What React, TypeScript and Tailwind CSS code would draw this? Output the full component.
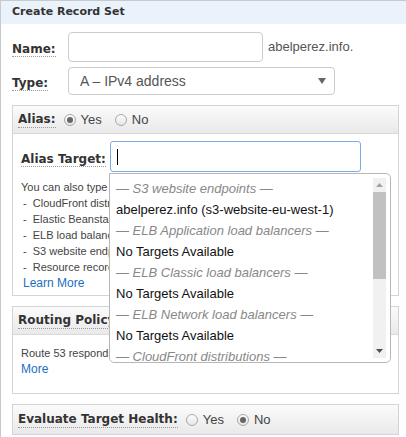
import React from "react";

const LABEL = "font-['DejaVu_Sans',sans-serif] font-bold text-[12px] text-[#333] border-b border-dotted border-[#999] leading-[15px]";
const ARIAL = "font-['Liberation_Sans',Arial,sans-serif]";

function Radio({ checked, label }: { checked?: boolean; label: string }) {
  return (
    <span className={`flex items-center gap-[5px] ${ARIAL} text-[13px] text-[#444]`}>
      <span className="w-[12px] h-[12px] rounded-full border border-[#a9a9a9] bg-gradient-to-b from-[#fdfdfd] to-[#e6e6e6] flex items-center justify-center">
        {checked && <span className="w-[6px] h-[6px] rounded-full bg-[#666]" />}
      </span>
      {label}
    </span>
  );
}

function BoxHeader({ children }: { children: React.ReactNode }) {
  return (
    <div className="h-[28px] flex items-center px-[5px] bg-gradient-to-b from-[#fbfbfb] to-[#e9e9e9] border-b border-[#d9d9d9]">
      {children}
    </div>
  );
}

const dropdownItems: { text: string; group?: boolean }[] = [
  { text: "— S3 website endpoints —", group: true },
  { text: "abelperez.info (s3-website-eu-west-1)" },
  { text: "— ELB Application load balancers —", group: true },
  { text: "No Targets Available" },
  { text: "— ELB Classic load balancers —", group: true },
  { text: "No Targets Available" },
  { text: "— ELB Network load balancers —", group: true },
  { text: "No Targets Available" },
  { text: "— CloudFront distributions —", group: true },
  { text: "No Targets Available" },
];

export default function App() {
  return (
    <div className="w-[406px] h-[437px] bg-white overflow-hidden">
      <div className="w-[420px] h-[437px] border-l border-t border-[#c9c9c9]">
        <div className="h-[23px] flex items-center pl-[11px] bg-[#eaf2fc] font-['DejaVu_Sans',sans-serif] font-bold text-[11px] text-[#333]">
          Create Record Set
        </div>
        <div className="pl-[11px] w-[398px]">
          {/* Name */}
          <div className="mt-[8px] flex items-center h-[30px]">
            <div className="w-[56px]"><span className={LABEL}>Name:</span></div>
            <div className="w-[195px] h-[30px] border border-[#cccccc] rounded-[4px]" />
            <span className={`ml-[5px] ${ARIAL} text-[13px] text-[#555]`}>abelperez.info.</span>
          </div>
          {/* Type */}
          <div className="mt-[5px] flex items-center h-[28px]">
            <div className="w-[56px]"><span className={LABEL}>Type:</span></div>
            <div className="w-[267px] h-[28px] border border-[#cccccc] rounded-[4px] flex items-center justify-between pl-[11px] pr-[8px]">
              <span className={`${ARIAL} text-[14px] text-[#555]`}>A – IPv4 address</span>
              <svg width="8" height="6" viewBox="0 0 8 6"><path d="M0 0h8L4 6z" fill="#666" /></svg>
            </div>
          </div>

          {/* Alias box */}
          <div className="mt-[10px] border border-[#d4d4d4] h-[191px]">
            <BoxHeader>
              <span className={LABEL}>Alias:</span>
              <span className="ml-[8px]"><Radio checked label="Yes" /></span>
              <span className="ml-[13px]"><Radio label="No" /></span>
            </BoxHeader>
            <div className="mt-[7px] flex items-center pl-[8px]">
              <div className="w-[89px]"><span className={LABEL}>Alias Target:</span></div>
              <div className="relative">
                <div className="w-[251px] h-[31px] border border-[#7eaae6] rounded-[3px] flex items-center pl-[6px]">
                  <span className="w-[1px] h-[16px] bg-black" />
                </div>
                <div className="absolute left-[-1px] top-[32px] w-[282px] h-[190px] bg-white border border-[#b7b7b7] rounded-b-[5px] rounded-tr-[5px] z-10 flex">
                  <div className={`flex-1 overflow-hidden pt-[4px] pl-[6px] ${ARIAL} text-[13px]`}>
                    {dropdownItems.map((it, i) => (
                      <div
                        key={i}
                        className={`h-[21px] leading-[21px] whitespace-nowrap ${it.group ? "italic text-[#888]" : "text-[#111]"}`}
                      >
                        {it.text}
                      </div>
                    ))}
                  </div>
                  <div className="w-[13px] mr-[4px] my-[4px] bg-[#f1f1f1] flex flex-col items-center">
                    <div className="h-[14px] flex items-center justify-center">
                      <svg width="7" height="4" viewBox="0 0 7 4"><path d="M0 4h7L3.5 0z" fill="#a3a3a3" /></svg>
                    </div>
                    <div className="w-[13px] h-[87px] bg-[#c1c1c1]" />
                    <div className="flex-1" />
                    <div className="h-[14px] flex items-center justify-center">
                      <svg width="7" height="4" viewBox="0 0 7 4"><path d="M0 0h7L3.5 4z" fill="#505050" /></svg>
                    </div>
                  </div>
                </div>
              </div>
            </div>
            <div className={`mt-[7px] pl-[8px] w-[360px] ${ARIAL} text-[11px] leading-[16px] text-[#444] whitespace-nowrap overflow-hidden`}>
              <div>You can also type the domain name for the resource. Examples:</div>
              <div className="pl-[2px]">-&nbsp;&nbsp;CloudFront distribution domain name: d111111abcdef8.cloudfront.net</div>
              <div className="pl-[2px]">-&nbsp;&nbsp;Elastic Beanstalk environment CNAME: example.elasticbeanstalk.com</div>
              <div className="pl-[2px]">-&nbsp;&nbsp;ELB load balancer DNS name: example-1.us-east-2.elb.amazonaws.com</div>
              <div className="pl-[2px]">-&nbsp;&nbsp;S3 website endpoint: s3-website.us-east-2.amazonaws.com</div>
              <div className="pl-[2px]">-&nbsp;&nbsp;Resource record set in this hosted zone: www.example.com</div>
              <div className="pl-[2px] text-[12px] text-[#1a6fc1]">Learn More</div>
            </div>
          </div>

          {/* Routing Policy */}
          <div className="mt-[10px] border border-[#d4d4d4] h-[88px]">
            <BoxHeader>
              <span className={LABEL}>Routing Policy:</span>
            </BoxHeader>
            <div className={`mt-[10px] pl-[8px] w-[360px] ${ARIAL} text-[11px] leading-[16px] text-[#444] whitespace-nowrap overflow-hidden`}>
              <div>Route 53 responds to queries based only on the values in this record. <span className="text-[#1a6fc1]">Learn</span></div>
              <div className="text-[12px] text-[#1a6fc1]">More</div>
            </div>
          </div>

          {/* Evaluate Target Health */}
          <div className="mt-[10px] border border-[#d4d4d4] h-[31px]">
            <div className="h-[29px] flex items-center px-[5px] bg-gradient-to-b from-[#fbfbfb] to-[#e9e9e9]">
              <span className={LABEL}>Evaluate Target Health:</span>
              <span className="ml-[8px]"><Radio label="Yes" /></span>
              <span className="ml-[13px]"><Radio checked label="No" /></span>
            </div>
          </div>
        </div>
      </div>
    </div>
  );
}
